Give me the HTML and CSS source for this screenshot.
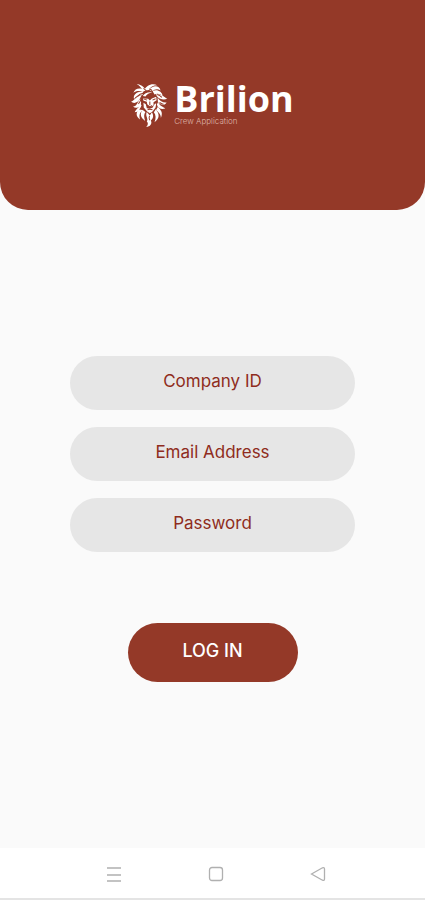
FILE: index.html
```html
<!DOCTYPE html>
<html lang="en">
<head>
<meta charset="utf-8">
<meta name="viewport" content="width=device-width, initial-scale=1">
<title>Brilion Crew Application</title>
<link rel="stylesheet" href="styles.css">
</head>
<body>
<header class="hero">
  <div class="brand">
    <svg class="lion" viewBox="22 18 110 137" aria-hidden="true">
      <g class="mane">
        <path d="M66 42C58 29 48 25 39 25C48 29 50 34 55 39C43 35 33 40 29 50C38 43 49 44 57 48Z"/>
        <path d="M57 47C40 45 27 55 31 69C36 59 46 55 57 57Z"/>
        <path d="M54 57C37 60 31 75 22 77C31 84 44 79 48 68Z"/>
        <path d="M50 67C39 80 41 89 28 91C36 99 51 94 52 79Z"/>
        <path d="M49 82C47 95 36 99 33 108C44 108 52 101 54 88Z"/>
        <path d="M48 98C35 108 36 121 49 130C45 117 48 109 56 103Z"/>
        <path d="M56 101C46 115 53 127 64 134C60 121 60 113 65 107Z"/>
        <path d="M61 44C66 28 86 20 100 28C88 28 79 33 75 42Z"/>
        <path d="M76 42C86 27 106 27 110 43C101 37 92 39 85 46Z"/>
        <path d="M86 45C99 38 115 46 116 59C108 52 99 51 92 55Z"/>
        <path d="M96 55C110 51 121 62 130 68C119 72 107 69 101 63Z"/>
        <path d="M101 64C108 75 117 80 128 79C122 90 108 87 102 77Z"/>
        <path d="M103 77C106 90 117 91 124 97C113 101 101 96 99 85Z"/>
        <path d="M102 92C108 101 119 106 111 125C111 113 103 109 97 101Z"/>
        <path d="M96 99C108 115 107 126 92 138C97 125 96 116 90 108Z"/>
        <path d="M69 107C63 120 75 125 69 136C75 142 71 149 67 152C79 152 86 142 81 133C90 125 89 116 84 108L78 118Z"/>
        <path d="M57 60C62 50 73 47 85 49C76 50 69 54 65 61Z"/>
        <path d="M58 67L73 68L78 73L84 67L97 62L98 72L89 78L89 88L82 92L75 91L70 83L69 77L59 74Z"/>
        <path d="M59 80L66 84L69 96L77 98L86 95L93 83L97 82L95 94L86 106L78 111L70 106L60 94Z"/>
      </g>
      <g class="shade">
        <path d="M61 69L70 72M86 72L95 68M78 76V87M72 88L78 93L85 88M71 101Q78 97 86 101"/>
        <path d="M59 37Q68 42 69 49M77 39Q84 40 86 48M42 60Q50 51 59 53M44 83Q51 75 52 68M48 101Q53 95 55 88M100 55Q108 57 114 64M107 79Q114 84 119 84M77 119Q74 126 78 132"/>
      </g>
    </svg>
    <div class="wordmark">
      <h1 class="name">Brilion</h1>
      <p class="tagline">Crew Application</p>
    </div>
  </div>
</header>
<main class="content">
  <form class="login">
    <div class="fields">
      <input class="field" type="text" placeholder="Company ID" aria-label="Company ID">
      <input class="field" type="email" placeholder="Email Address" aria-label="Email Address">
      <input class="field" type="password" placeholder="Password" aria-label="Password">
    </div>
    <button class="submit" type="submit">LOG IN</button>
  </form>
</main>
<nav class="system-bar" aria-label="System navigation">
  <button class="key" type="button" aria-label="Recent apps">
    <svg viewBox="0 0 18 18"><path d="M2 3H16M2 10H16M2 16H16"/></svg>
  </button>
  <button class="key" type="button" aria-label="Home">
    <svg viewBox="0 0 18 18"><rect x="2.5" y="2.5" width="13" height="13" rx="2.5"/></svg>
  </button>
  <button class="key" type="button" aria-label="Back">
    <svg viewBox="0 0 18 18"><path d="M2.5 9L13.5 2.8Q15.5 2 15.5 4V14Q15.5 16 13.5 15.2Z"/></svg>
  </button>
</nav>
</body>
</html>
```
FILE: styles.css
```css
* {
  box-sizing: border-box;
}

body {
  margin: 0;
  min-height: 100vh;
  display: flex;
  flex-direction: column;
  background: #fafafa;
  font-family: Inter, "Liberation Sans", sans-serif;
}

.hero {
  display: flex;
  justify-content: center;
  padding: 82px 16px;
  background: #943928;
  border-radius: 0 0 28px 28px;
}

.brand {
  display: flex;
  gap: 6px;
  color: #fff;
}

.lion {
  width: 37px;
  height: 46px;
}

.mane {
  fill: #fff;
}

.shade {
  fill: none;
  stroke: #943928;
  stroke-width: 3;
}

.wordmark {
  display: flex;
  flex-direction: column;
}

.name {
  margin: 0;
  font: 700 36px/34px "Open Sans", sans-serif;
}

.tagline {
  margin: 0;
  font-size: 8px;
  font-weight: 300;
  line-height: 10px;
  color: #dfb5aa;
}

.content {
  flex: 1;
  display: flex;
  flex-direction: column;
  justify-content: center;
  padding: 20px 0;
}

.login {
  display: flex;
  flex-direction: column;
  align-items: center;
  gap: 71px;
  padding-bottom: 20px;
}

.fields {
  width: 67%;
  display: flex;
  flex-direction: column;
  gap: 17px;
}

.field {
  width: 100%;
  height: 54px;
  padding: 0 20px 4px;
  border: 0;
  border-radius: 27px;
  background: #e6e6e6;
  color: #8f2c20;
  font: 400 17px/24px Inter, sans-serif;
  text-align: center;
}

.field::placeholder {
  color: #8f2c20;
  opacity: 1;
}

.submit {
  width: 40%;
  height: 59px;
  padding: 0 0 4px;
  border: 0;
  border-radius: 30px;
  background: #943928;
  color: #fff;
  font: 500 18px/24px Inter, sans-serif;
}

.system-bar {
  display: flex;
  justify-content: center;
  gap: 84px;
  padding: 17px 0 15px 7px;
  background: #fff;
  border-bottom: 2px solid #e4e4e4;
}

.key {
  display: flex;
  padding: 0;
  border: 0;
  background: none;
}

.key svg {
  width: 18px;
  height: 18px;
  fill: none;
  stroke: #b0b0b0;
  stroke-width: 1.3;
}
```
